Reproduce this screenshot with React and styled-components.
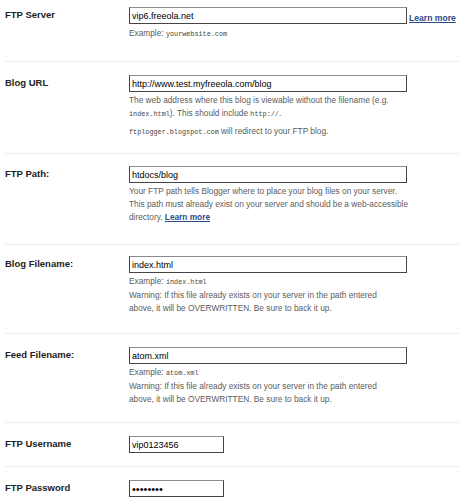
import React from "react";
import styled, { createGlobalStyle } from "styled-components";

const Global = createGlobalStyle`
  html, body { margin: 0; padding: 0; background: #fff; }
  body { font-family: "Liberation Sans", Arial, sans-serif; }
`;

const Form = styled.div`
  width: 459px;
  overflow: hidden;
`;

const Row = styled.div`
  display: grid;
  grid-template-columns: 124px 1fr;
  margin-left: 5px;
  padding-top: ${(p) => p.$pt}px;
  padding-bottom: ${(p) => p.$pb}px;
  border-bottom: ${(p) => (p.$last ? "none" : "1px solid #ececec")};
`;

const Label = styled.div`
  font-size: 9.5px;
  font-weight: bold;
  color: #222;
  line-height: 12px;
  padding-top: 2px;
  white-space: nowrap;
`;

const Field = styled.div`
  display: flex;
  flex-direction: column;
`;

const InputLine = styled.div`
  display: flex;
  align-items: flex-end;
  gap: 2px;
`;

const TextInput = styled.input`
  box-sizing: border-box;
  width: ${(p) => p.$w}px;
  height: 17px;
  margin: 0;
  padding: 0 2px;
  font-family: "Liberation Sans", Arial, sans-serif;
  font-size: ${(p) => p.$fs ?? 9}px;
  color: #000;
  background: #fff;
  border-top: 1px solid #8c8c8c;
  border-left: 1px solid #444;
  border-right: 1px solid #444;
  border-bottom: 1px solid #444;
  outline: none;
`;

const Link = styled.a`
  font-size: ${(p) => p.$size ?? 8.6}px;
  font-weight: bold;
  color: #2b4a8a;
  text-decoration: underline;
  line-height: 12px;
  cursor: pointer;
`;

const Help = styled.div`
  margin-top: ${(p) => p.$mt ?? 2}px;
  font-size: 8.3px;
  line-height: 13px;
  color: #5c5c5c;
  white-space: nowrap;
`;

const Code = styled.code`
  font-family: "Liberation Mono", "Courier New", monospace;
  font-size: 6.8px;
  color: #444;
`;

export default function App() {
  return (
    <Form>
      <Global />
      <Row $pt={7} $pb={20}>
        <Label>FTP Server</Label>
        <Field>
          <InputLine>
            <TextInput $w={278} defaultValue="vip6.freeola.net" />
            <Link>Learn more</Link>
          </InputLine>
          <Help $mt={3}>
            Example: <Code>yourwebsite.com</Code>
          </Help>
        </Field>
      </Row>

      <Row $pt={13} $pb={14}>
        <Label>Blog URL</Label>
        <Field>
          <TextInput $w={278} defaultValue="http://www.test.myfreeola.com/blog" />
          <Help>
            The web address where this blog is viewable without the filename (e.g.
            <br />
            <Code>index.html</Code>). This should include <Code>http://</Code>.
          </Help>
          <Help $mt={4}>
            <Code>ftplogger.blogspot.com</Code> will redirect to your FTP blog.
          </Help>
        </Field>
      </Row>

      <Row $pt={12} $pb={20}>
        <Label>FTP Path:</Label>
        <Field>
          <TextInput $w={278} defaultValue="htdocs/blog" />
          <Help>
            Your FTP path tells Blogger where to place your blog files on your server.
            <br />
            This path must already exist on your server and should be a web-accessible
            <br />
            directory. <Link $size={8.3}>Learn more</Link>
          </Help>
        </Field>
      </Row>

      <Row $pt={11} $pb={18}>
        <Label>Blog Filename:</Label>
        <Field>
          <TextInput $w={278} defaultValue="index.html" />
          <Help>
            Example: <Code>index.html</Code>
            <br />
            Warning: If this file already exists on your server in the path entered
            <br />
            above, it will be OVERWRITTEN. Be sure to back it up.
          </Help>
        </Field>
      </Row>

      <Row $pt={13} $pb={16}>
        <Label>Feed Filename:</Label>
        <Field>
          <TextInput $w={278} defaultValue="atom.xml" />
          <Help>
            Example: <Code>atom.xml</Code>
            <br />
            Warning: If this file already exists on your server in the path entered
            <br />
            above, it will be OVERWRITTEN. Be sure to back it up.
          </Help>
        </Field>
      </Row>

      <Row $pt={13} $pb={13}>
        <Label>FTP Username</Label>
        <Field>
          <TextInput $w={95} defaultValue="vip0123456" />
        </Field>
      </Row>

      <Row $pt={13} $pb={4} $last>
        <Label>FTP Password</Label>
        <Field>
          <TextInput $w={95} $fs={11} type="password" defaultValue="abcdefgh" />
        </Field>
      </Row>
    </Form>
  );
}
